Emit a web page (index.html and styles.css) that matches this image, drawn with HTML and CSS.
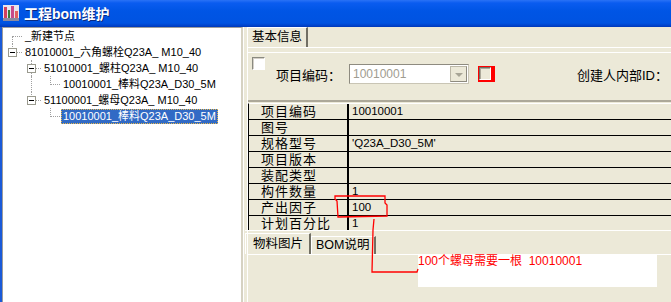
FILE: index.html
```html
<!DOCTYPE html>
<html lang="zh-CN">
<head>
    <meta charset="UTF-8">
    <title>工程bom维护</title>
    <link rel="stylesheet" href="styles.css">
</head>
<body>
    <div class="window">
        <header class="titlebar">
            <svg class="app-icon" width="16" height="16" viewBox="0 0 16 16">
                <rect x="0" y="0" width="16" height="16" fill="#e8e4ec"/>
                <rect x="1" y="2" width="3" height="11" fill="#d04060"/>
                <rect x="5" y="5" width="2" height="8" fill="#3a7a3a"/>
                <rect x="8" y="1" width="3" height="12" fill="#c84a8a"/>
                <rect x="12" y="6" width="3" height="7" fill="#e06060"/>
                <rect x="0" y="13" width="16" height="3" fill="#8a8aa0"/>
            </svg>
            <span class="title">工程bom维护</span>
        </header>

        <div class="frame">
            <nav class="tree">
                <div class="node">
                    <span class="g down h"></span>
                    <span class="label">_新建节点</span>
                </div>
                <div class="node">
                    <span class="g up h"><span class="box"></span></span>
                    <span class="label">81010001_六角螺栓Q23A_ M10_40</span>
                </div>
                <div class="node">
                    <span class="g"></span>
                    <span class="g full h"><span class="box"></span></span>
                    <span class="label">51010001_螺柱Q23A_ M10_40</span>
                </div>
                <div class="node">
                    <span class="g"></span>
                    <span class="g full"></span>
                    <span class="g up h"></span>
                    <span class="label">10010001_棒料Q23A_D30_5M</span>
                </div>
                <div class="node">
                    <span class="g"></span>
                    <span class="g up h"><span class="box"></span></span>
                    <span class="label">51100001_螺母Q23A_ M10_40</span>
                </div>
                <div class="node">
                    <span class="g"></span>
                    <span class="g"></span>
                    <span class="g up h"></span>
                    <span class="label selected">10010001_棒料Q23A_D30_5M</span>
                </div>
            </nav>

            <main class="right">
                <div class="tabs">
                    <span class="tab active">基本信息</span>
                </div>
                <section class="page">
                    <div class="panel">
                        <span class="chk"></span>
                        <div class="fields">
                            <span class="field-label">项目编码：</span>
                            <span class="combo">
                                <span class="combo-text">10010001</span>
                                <span class="combo-btn"></span>
                            </span>
                            <span class="chk-mark"><span class="chk"></span></span>
                            <span class="field-label creator">创建人内部ID：</span>
                            <span class="cut">1</span>
                        </div>
                    </div>

                    <div class="grid">
                        <div class="row"><span class="key">项目编码</span><span class="val">10010001</span></div>
                        <div class="row"><span class="key">图号</span><span class="val"></span></div>
                        <div class="row"><span class="key">规格型号</span><span class="val">'Q23A_D30_5M'</span></div>
                        <div class="row"><span class="key">项目版本</span><span class="val"></span></div>
                        <div class="row"><span class="key">装配类型</span><span class="val"></span></div>
                        <div class="row"><span class="key">构件数量</span><span class="val">1</span></div>
                        <div class="row"><span class="key">产出因子</span><span class="val">100</span></div>
                        <div class="row"><span class="key">计划百分比</span><span class="val">1</span></div>
                    </div>

                    <div class="subtabs">
                        <span class="tab active">物料图片</span>
                        <span class="tab">BOM说明</span>
                    </div>
                    <div class="subpage">
                        <div class="note">100个螺母需要一根&nbsp;&nbsp;10010001</div>
                    </div>
                </section>
            </main>
        </div>

        <!-- hand-drawn red marks from the screenshot -->
        <svg class="marks" width="671" height="302" viewBox="0 0 671 302">
            <path d="M335,196 L385,196 L385,203 L387,205 L387,216 L338,217 L337,201 L335,199 Z" />
            <path d="M374,219 L373,230 L372,272 L417,272 L418,269" />
        </svg>
    </div>
</body>
</html>
```

FILE: styles.css
```css
*,
*::before,
*::after {
  box-sizing: border-box;
}

body {
  margin: 0;
  font-family: "Liberation Sans", "Noto Sans CJK SC", sans-serif;
  font-size: 12px;
  color: #000;
}

.window {
  position: relative;
  width: 671px;
  height: 302px;
  overflow: hidden;
  background: #ece9d8;
}

/* title bar */
.titlebar {
  display: flex;
  align-items: center;
  gap: 5px;
  height: 27px;
  padding: 0 0 1px 3px;
  background: linear-gradient(#2a72f6 0, #0a5cf0 3px, #0055e5 40%, #0053e1 85%, #0046d0 93%, #0038b8 100%);
}

.title {
  color: #fff;
  font-weight: bold;
  font-size: 14px;
  text-shadow: 1px 1px 0 #0a2a80;
}

.frame {
  display: flex;
  height: 275px;
  border-left: 2px solid #1a5ad8;
}

/* tree */
.tree {
  flex: 0 0 241px;
  background: #fff;
  border-top: 1px solid #9c9c9c;
  border-left: 1px solid #9c9c9c;
  border-right: 2px solid #d6d2c2;
  font-size: 11px;
}

.node {
  display: flex;
  height: 16px;
  align-items: center;
  white-space: nowrap;
}

.g {
  position: relative;
  flex: 0 0 19px;
  height: 16px;
}

.g.up::before,
.g.down::before,
.g.full::before {
  content: "";
  position: absolute;
  left: 9px;
  border-left: 1px dotted #a0a0a0;
}

.g.up::before { top: 0; height: 9px; }
.g.down::before { top: 8px; height: 8px; }
.g.full::before { top: 0; height: 16px; }

.g.h::after {
  content: "";
  position: absolute;
  left: 10px;
  top: 8px;
  width: 9px;
  border-top: 1px dotted #a0a0a0;
}

.box {
  position: absolute;
  left: 5px;
  top: 4px;
  width: 9px;
  height: 9px;
  background: #fff;
  border: 1px solid #9a9a8e;
  z-index: 1;
}

.box::before {
  content: "";
  position: absolute;
  left: 1px;
  top: 3px;
  width: 5px;
  border-top: 1px solid #000;
}

.label {
  margin-left: 1px;
  padding: 0 1px;
  height: 15px;
  line-height: 13px;
  border: 1px dotted transparent;
}

.label.selected {
  background: #316ac5;
  color: #fff;
  border-color: #e8b84a;
}

/* right side */
.right {
  flex: 1;
  display: flex;
  flex-direction: column;
  padding-left: 3px;
  border-left: 1px solid #fff;
}

.tabs {
  display: flex;
  height: 20px;
  align-items: flex-end;
}

.tab {
  height: 18px;
  line-height: 16px;
  padding: 0 5px;
  border: 1px solid #fff;
  border-bottom: none;
  border-right: 2px solid #716f64;
  white-space: nowrap;
}

.tabs .tab.active {
  height: 20px;
  line-height: 18px;
  padding: 0 4px;
  font-size: 12.5px;
}

.page {
  flex: 1;
  border-top: 1px solid #fff;
  border-left: 1px solid #fff;
}

.panel {
  display: flex;
  align-items: flex-start;
  height: 50px;
  margin-top: 4px;
  border-top: 1px solid #fff;
  border-bottom: 2px solid #aca899;
}

.chk {
  flex: none;
  width: 13px;
  height: 13px;
  background: #fff;
  border-top: 1px solid #8a8a80;
  border-left: 1px solid #8a8a80;
  border-right: 1px solid #fff;
  border-bottom: 1px solid #fff;
  box-shadow: inset 1px 1px 0 #d4d0c8;
}

.panel > .chk {
  margin: 4px 0 0 4px;
}

.fields {
  display: flex;
  align-items: center;
  margin: 11px 0 0 11px;
  white-space: nowrap;
}

.field-label {
  width: 73px;
  font-size: 13px;
}

.combo {
  display: flex;
  align-items: center;
  justify-content: space-between;
  width: 120px;
  height: 20px;
  padding: 0 1px 0 3px;
  background: #fff;
  border: 1px solid #c9c5b5;
  border-top-color: #8e8b80;
  border-left-color: #8e8b80;
}

.combo-text {
  color: #a09c90;
}

.combo-btn {
  position: relative;
  width: 17px;
  height: 16px;
  background: #ece9d8;
  border: 1px solid #bcb8a8;
  border-right-color: #8e8b80;
  border-bottom-color: #8e8b80;
}

.combo-btn::before {
  content: "";
  position: absolute;
  left: 4px;
  top: 6px;
  border-left: 4px solid transparent;
  border-right: 4px solid transparent;
  border-top: 4px solid #a8a596;
}

.chk-mark {
  display: flex;
  margin-left: 9px;
  border: 2px solid #ff0000;
  border-right-width: 4px;
  border-top-width: 1px;
  border-left-width: 1px;
  background: #ff0000;
}

.chk-mark .chk {
  width: 12px;
  height: 13px;
  background: #ece9d8;
  border-top-color: #716f64;
  border-left-color: #716f64;
  border-right-color: #fff;
  border-bottom-color: #fff;
  box-shadow: inset 1px 1px 0 #aca899;
}

.creator {
  width: auto;
  margin-left: 82px;
}

.cut {
  margin-left: 3px;
  color: #555;
}

/* property grid */
.grid {
  height: 127px;
  overflow: hidden;
  margin-top: 1px;
  border-top: 1px solid #fff;
  border-left: 1px solid #000;
}

.row {
  display: flex;
  height: 16px;
  border-bottom: 1px solid #000;
  line-height: 15px;
}

.key {
  flex: 0 0 100px;
  padding-left: 12px;
  border-right: 2px solid #000;
  font-size: 13px;
  letter-spacing: 1px;
}

.val {
  flex: 1;
  padding-left: 3px;
  font-size: 11.5px;
}

/* lower tabs */
.subtabs {
  display: flex;
  align-items: flex-end;
  height: 24px;
  margin-left: -3px;
  border-top: 1px solid #fff;
}

.subtabs .tab {
  height: 18px;
  padding: 0 4px;
  font-size: 12.5px;
}

.subtabs .tab.active {
  height: 21px;
  line-height: 20px;
  padding: 0 6px 0 7px;
}

.subpage {
  border-top: 1px solid #fff;
  padding-left: 170px;
}

.note {
  width: 239px;
  height: 32px;
  background: #fff;
  color: #ff0000;
  line-height: 12px;
}

.marks {
  position: absolute;
  left: 0;
  top: 0;
  pointer-events: none;
  fill: none;
  stroke: #ff0000;
  stroke-width: 1.3;
}
```
